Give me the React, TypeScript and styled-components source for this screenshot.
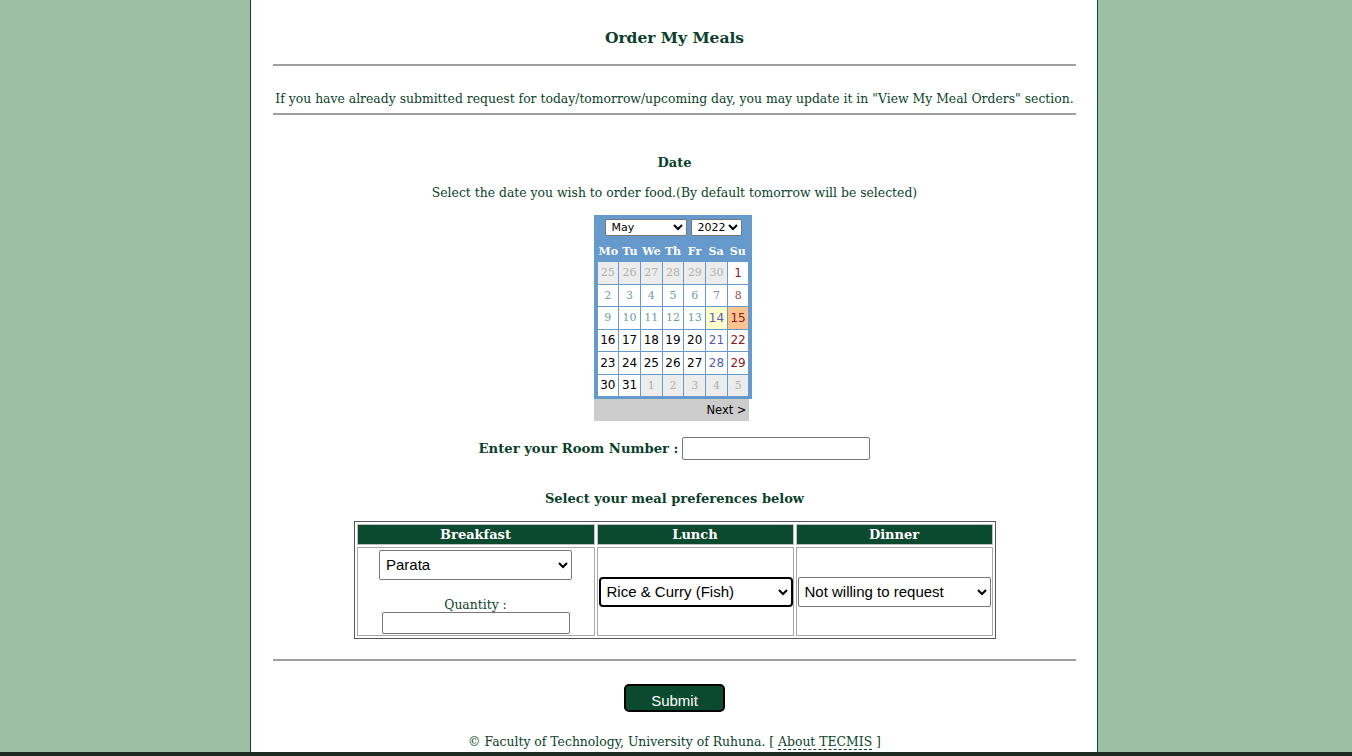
import React from "react";
import styled, { createGlobalStyle } from "styled-components";

const Global = createGlobalStyle`
  html, body { margin: 0; padding: 0; }
  body {
    background: #9dbfa4;
    font-family: "DejaVu Serif", Georgia, serif;
    color: #0b3f2b;
    height: 756px;
    overflow: hidden;
  }
`;

const Page = styled.div`
  display: flex;
  flex-direction: column;
  height: 756px;
`;

const Column = styled.main`
  width: 848px;
  margin-left: 250px;
  background: #fff;
  border-left: 1px solid #0b4a2e;
  border-right: 1px solid #0b4a2e;
  padding: 0 21px 0 22px;
  box-sizing: border-box;
  flex: 1;
  min-height: 0;
  overflow: hidden;
  display: flex;
  flex-direction: column;
  align-items: center;
  font-size: 12.4px;
`;

const BottomBar = styled.div`
  height: 4px;
  background: #1d2a24;
  flex: none;
`;

const Title = styled.h2`
  margin: 28px 0 0;
  font-size: 15.5px;
  font-weight: bold;
  line-height: 20px;
  color: #0b3f2b;
`;

const Rule = styled.hr<{ $top: number }>`
  width: 100%;
  flex: none;
  margin: ${(p) => p.$top}px 0 0;
  border: none;
  border-top: 2px solid #a0a0a0;
  height: 0;
`;

const Notice = styled.p`
  margin: 24px 0 0;
  line-height: 18px;
  white-space: nowrap;
`;

const SectionHead = styled.div<{ $top: number }>`
  margin-top: ${(p) => p.$top}px;
  font-weight: bold;
  font-size: 13px;
  line-height: 18px;
`;

const Hint = styled.div`
  margin-top: 12px;
  line-height: 18px;
`;

/* Calendar */
const Calendar = styled.div`
  margin-top: 13px;
  display: flex;
  flex-direction: column;
  align-items: flex-start;
  margin-right: 4px;
`;

const CalBody = styled.div`
  width: 151px;
  background: #6699cc;
  padding: 3px 3px 3px 4px;
  font-family: "DejaVu Sans", Tahoma, sans-serif;
`;

const CalSelects = styled.div`
  display: flex;
  justify-content: center;
  gap: 4px;
  height: 19px;
  margin-top: 1px;
`;

const SmallSelect = styled.select<{ $w: number }>`
  width: ${(p) => p.$w}px;
  height: 17px;
  font-family: "DejaVu Sans", Tahoma, sans-serif;
  font-size: 11px;
  padding: 0 0 0 2px;
  border: 1px solid #767676;
  border-radius: 2px;
  background: #fff;
  color: #000;
`;

const DayNames = styled.div`
  display: grid;
  grid-template-columns: repeat(7, 1fr);
  height: 22px;
  align-items: center;
  margin-top: 2px;
`;

const DayName = styled.span`
  color: #fff;
  font-family: "DejaVu Serif", Georgia, serif;
  font-weight: bold;
  font-size: 11px;
  text-align: center;
`;

const Grid = styled.div`
  display: grid;
  grid-template-columns: repeat(7, 1fr);
  grid-auto-rows: 21.5px;
  gap: 1px;
`;

type Kind = "other" | "past" | "active" | "today" | "selected";

const Cell = styled.div<{ $kind: Kind; $col: number }>`
  display: flex;
  align-items: center;
  justify-content: center;
  background: ${(p) =>
    p.$kind === "other"
      ? "#ececec"
      : p.$kind === "today"
      ? "#ffffcc"
      : p.$kind === "selected"
      ? "#fdc38f"
      : "#fff"};
  color: ${(p) => {
    if (p.$kind === "other") return "#b0b0b0";
    if (p.$col === 6) return p.$kind === "past" ? "#a04848" : "#8b1a1a";
    if (p.$col === 5) return p.$kind === "past" ? "#8484c4" : "#5a5ab4";
    if (p.$kind === "past") return "#6fa0a0";
    if (p.$kind === "today") return "#5a5ab4";
    return "#000";
  }};
  font-family: ${(p) =>
    p.$kind === "other" || p.$kind === "past"
      ? `"DejaVu Serif", Georgia, serif`
      : `"DejaVu Sans", Tahoma, sans-serif`};
  font-size: ${(p) => (p.$kind === "other" || p.$kind === "past" ? "11px" : "12px")};
`;

const NextBar = styled.div`
  width: 155px;
  height: 22px;
  background: #cccccc;
  display: flex;
  align-items: center;
  justify-content: flex-end;
  box-sizing: border-box;
  padding-right: 2px;
  font-family: "DejaVu Sans", Tahoma, sans-serif;
  font-size: 11.5px;
  color: #000;
`;

/* Room */
const RoomRow = styled.div`
  margin-top: 16px;
  display: flex;
  align-items: center;
  gap: 4px;
`;

const RoomLabel = styled.label`
  font-weight: bold;
  font-size: 13.2px;
`;

const TextInput = styled.input<{ $w: number; $h: number }>`
  width: ${(p) => p.$w}px;
  height: ${(p) => p.$h}px;
  box-sizing: border-box;
  border: 1px solid #767676;
  border-radius: 2px;
  padding: 1px 2px;
  font-size: 13px;
`;

/* Meals table */
const MealTable = styled.table`
  margin-top: 13px;
  border: 1px solid #555;
  border-collapse: separate;
  border-spacing: 2px;
  width: 642px;
  table-layout: fixed;
`;

const Th = styled.th<{ $w: number }>`
  width: ${(p) => p.$w}px;
  background: #0b4a2e;
  color: #fff;
  font-weight: bold;
  font-size: 13px;
  height: 19px;
  padding: 0;
  border: 1px solid #c0c0c0;
`;

const Td = styled.td`
  border: 1px solid #a8a8a8;
  text-align: center;
  vertical-align: middle;
  height: 85px;
  padding: 1px;
`;

const FieldStack = styled.div`
  display: flex;
  flex-direction: column;
  align-items: center;
`;

const MealSelect = styled.select<{ $focus?: boolean; $w: number }>`
  width: ${(p) => p.$w}px;
  height: 30px;
  font-family: Arial, "Liberation Sans", sans-serif;
  font-size: 15px;
  color: #000;
  background: #fff;
  border: ${(p) => (p.$focus ? "2px solid #000" : "1px solid #767676")};
  border-radius: ${(p) => (p.$focus ? "4px" : "2px")};
  padding: 0 2px;
`;

const QtyLabel = styled.div`
  margin-top: 17px;
  line-height: 15px;
`;

const SubmitButton = styled.button`
  margin-top: 23px;
  width: 101px;
  height: 28px;
  background: #0b4a2e;
  color: #fff;
  border: 2px solid #000;
  border-radius: 5px;
  font-family: Arial, "Liberation Sans", sans-serif;
  font-size: 15px;
  padding: 4px 0 0;
`;

const Footer = styled.div`
  margin-top: 21px;
  line-height: 18px;
`;

const AboutLink = styled.a`
  color: #0b3f2b;
  text-decoration: none;
  border-bottom: 1px dashed #0b3f2b;
`;

const dayNames = ["Mo", "Tu", "We", "Th", "Fr", "Sa", "Su"];

type Day = { n: number; kind: Kind };
const days: Day[] = [
  ...[25, 26, 27, 28, 29, 30].map((n) => ({ n, kind: "other" as Kind })),
  ...Array.from({ length: 31 }, (_, i) => {
    const n = i + 1;
    let kind: Kind = "active";
    if (n >= 2 && n <= 13) kind = "past";
    if (n === 14) kind = "today";
    if (n === 15) kind = "selected";
    return { n, kind };
  }),
  ...[1, 2, 3, 4, 5].map((n) => ({ n, kind: "other" as Kind })),
];

export default function App() {
  return (
    <Page>
      <Global />
      <Column>
        <Title>Order My Meals</Title>
        <Rule $top={16} />
        <Notice>
          If you have already submitted request for today/tomorrow/upcoming day, you may update it in
          "View My Meal Orders" section.
        </Notice>
        <Rule $top={5} />
        <SectionHead $top={39}>Date</SectionHead>
        <Hint>Select the date you wish to order food.(By default tomorrow will be selected)</Hint>
        <Calendar>
          <CalBody>
            <CalSelects>
              <SmallSelect $w={82} defaultValue="May">
                {["January", "February", "March", "April", "May", "June", "July", "August", "September", "October", "November", "December"].map((m) => (
                  <option key={m}>{m}</option>
                ))}
              </SmallSelect>
              <SmallSelect $w={51} defaultValue="2022">
                <option>2021</option>
                <option>2022</option>
                <option>2023</option>
              </SmallSelect>
            </CalSelects>
            <DayNames>
              {dayNames.map((d) => (
                <DayName key={d}>{d}</DayName>
              ))}
            </DayNames>
            <Grid>
              {days.map((d, i) => (
                <Cell key={i} $kind={d.kind} $col={i % 7}>
                  {d.n}
                </Cell>
              ))}
            </Grid>
          </CalBody>
          <NextBar>Next &gt;</NextBar>
        </Calendar>
        <RoomRow>
          <RoomLabel>Enter your Room Number :</RoomLabel>
          <TextInput $w={188} $h={23} />
        </RoomRow>
        <SectionHead $top={30}>Select your meal preferences below</SectionHead>
        <MealTable>
          <thead>
            <tr>
              <Th $w={236}>Breakfast</Th>
              <Th $w={195}>Lunch</Th>
              <Th $w={195}>Dinner</Th>
            </tr>
          </thead>
          <tbody>
            <tr>
              <Td>
                <FieldStack>
                  <MealSelect $w={193} defaultValue="Parata">
                    <option>Not willing to request</option>
                    <option>Parata</option>
                    <option>Bread</option>
                  </MealSelect>
                  <QtyLabel>Quantity :</QtyLabel>
                  <TextInput $w={188} $h={22} />
                </FieldStack>
              </Td>
              <Td>
                <MealSelect $w={194} $focus defaultValue="Rice & Curry (Fish)">
                  <option>Not willing to request</option>
                  <option>Rice &amp; Curry (Fish)</option>
                  <option>Rice &amp; Curry (Chicken)</option>
                </MealSelect>
              </Td>
              <Td>
                <MealSelect $w={193} defaultValue="Not willing to request">
                  <option>Not willing to request</option>
                  <option>Rice &amp; Curry (Fish)</option>
                </MealSelect>
              </Td>
            </tr>
          </tbody>
        </MealTable>
        <Rule $top={20} />
        <SubmitButton>Submit</SubmitButton>
        <Footer>
          © Faculty of Technology, University of Ruhuna. [ <AboutLink href="#">About TECMIS</AboutLink> ]
        </Footer>
      </Column>
      <BottomBar />
    </Page>
  );
}
